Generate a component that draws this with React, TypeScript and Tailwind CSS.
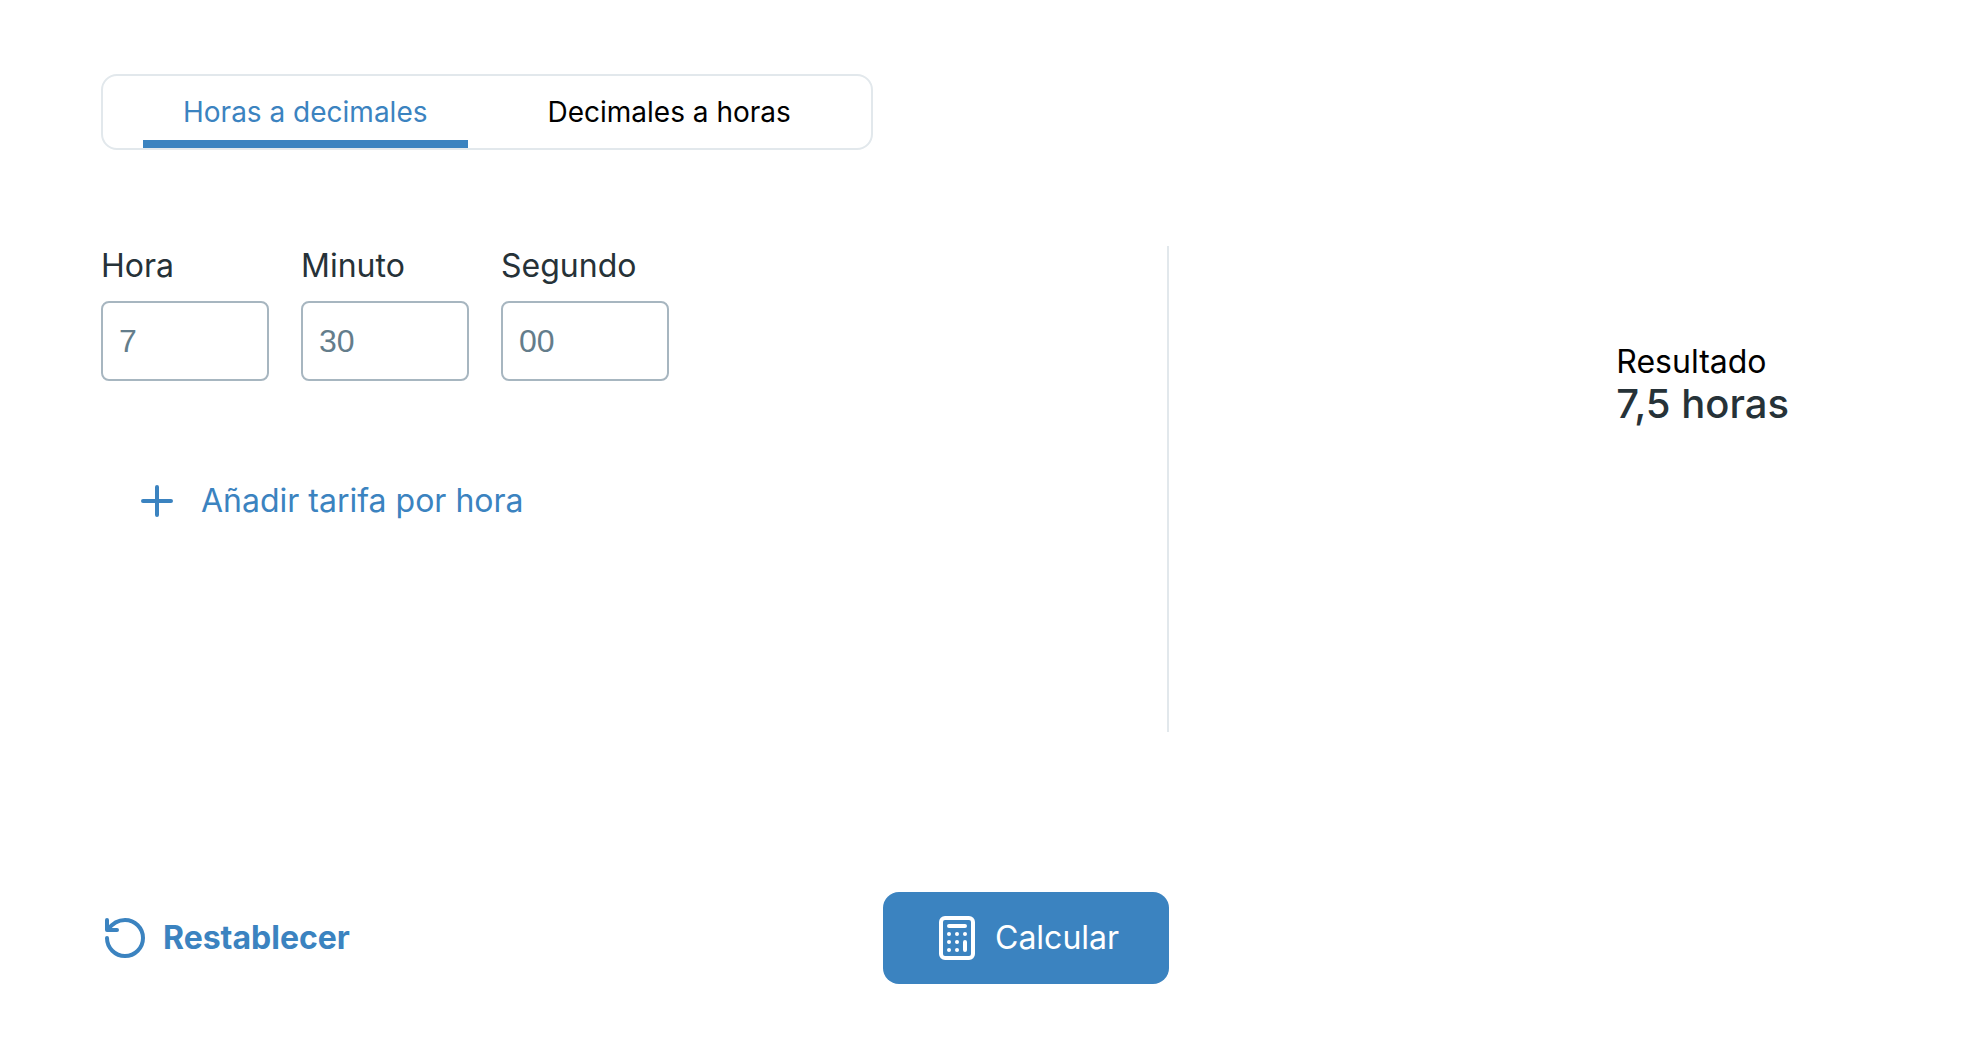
import { useState } from "react";

const tabs = ["Horas a decimales", "Decimales a horas"];

const fields = [
  { id: "hora", label: "Hora", placeholder: "7" },
  { id: "minuto", label: "Minuto", placeholder: "30" },
  { id: "segundo", label: "Segundo", placeholder: "00" },
];

function PlusIcon() {
  return (
    <svg className="size-8" viewBox="0 0 32 32" fill="none" stroke="currentColor" strokeWidth="4" strokeLinecap="round">
      <path d="M16 2v28M2 16h28" />
    </svg>
  );
}

function ResetIcon() {
  return (
    <svg className="size-10" viewBox="0 0 40 40" fill="none" stroke="currentColor" strokeWidth="4" strokeLinecap="round" strokeLinejoin="round">
      <path d="M2 20A18 18 0 1 0 20 2C13 2 7 6 3 11.500" />
      <path d="M2 2v10h10" />
    </svg>
  );
}

function CalculatorIcon() {
  return (
    <svg className="h-11 w-9" viewBox="0 0 36 44" fill="none" stroke="currentColor" strokeWidth="4" strokeLinecap="round">
      <rect x="2" y="2" width="32" height="40" rx="4" />
      <path d="M10 10h16M26 26v8" />
      <g fill="currentColor" stroke="none">
        <circle cx="10" cy="18" r="2" />
        <circle cx="18" cy="18" r="2" />
        <circle cx="26" cy="18" r="2" />
        <circle cx="10" cy="26" r="2" />
        <circle cx="18" cy="26" r="2" />
        <circle cx="10" cy="34" r="2" />
        <circle cx="18" cy="34" r="2" />
      </g>
    </svg>
  );
}

export default function App() {
  const [active, setActive] = useState(0);

  return (
    <main className="min-h-screen bg-white px-[101px] py-[74px] font-['Inter',sans-serif] text-[32px] leading-10 text-[#263238]">
      {/* Tabs */}
      <div role="tablist" className="flex w-fit gap-10 rounded-2xl border-2 border-[#e2e8ec] px-10 text-[28px]">
        {tabs.map((tab, i) => (
          <button
            key={tab}
            role="tab"
            aria-selected={active === i}
            onClick={() => setActive(i)}
            className={
              active === i
                ? "h-[72px] border-b-8 border-[#3b83c0] px-10 pt-2 text-[#3b83c0]"
                : "h-[72px] border-b-8 border-transparent px-10 pt-2 text-black"
            }
          >
            {tab}
          </button>
        ))}
      </div>

      <div className="mt-24 grid grid-cols-[89fr_58fr]">
        {/* Form */}
        <div className="min-h-[486px] border-r-2 border-[#e2e8ec]">
          <div className="flex gap-8">
            {fields.map((field) => (
              <div key={field.id} className="w-[168px]">
                <label htmlFor={field.id} className="block">
                  {field.label}
                </label>
                <input
                  id={field.id}
                  type="text"
                  placeholder={field.placeholder}
                  className="mt-[15px] block h-20 w-full rounded-lg border-2 border-[#a7b6c0] px-4 font-['Liberation_Sans',sans-serif] placeholder:text-[#647d8b]"
                />
              </div>
            ))}
          </div>
          <button className="mt-20 ml-10 flex h-20 items-center gap-7 text-[#3b83c0]">
            <PlusIcon />
            Añadir tarifa por hora
          </button>
        </div>

        {/* Result */}
        <div className="flex justify-end pt-24 pr-[76px]">
          <div>
            <p className="text-black">Resultado</p>
            <p className="text-[40px] leading-[44px] font-medium">7,5 horas</p>
          </div>
        </div>

        {/* Actions */}
        <div className="mt-40 flex items-center justify-between">
          <button className="flex items-center gap-[18px] pl-1 font-bold text-[#3b83c0]">
            <ResetIcon />
            Restablecer
          </button>
          <button className="flex h-[92px] w-[286px] items-center gap-5 rounded-2xl bg-[#3b83c0] pl-14 text-white">
            <CalculatorIcon />
            Calcular
          </button>
        </div>
      </div>
    </main>
  );
}
